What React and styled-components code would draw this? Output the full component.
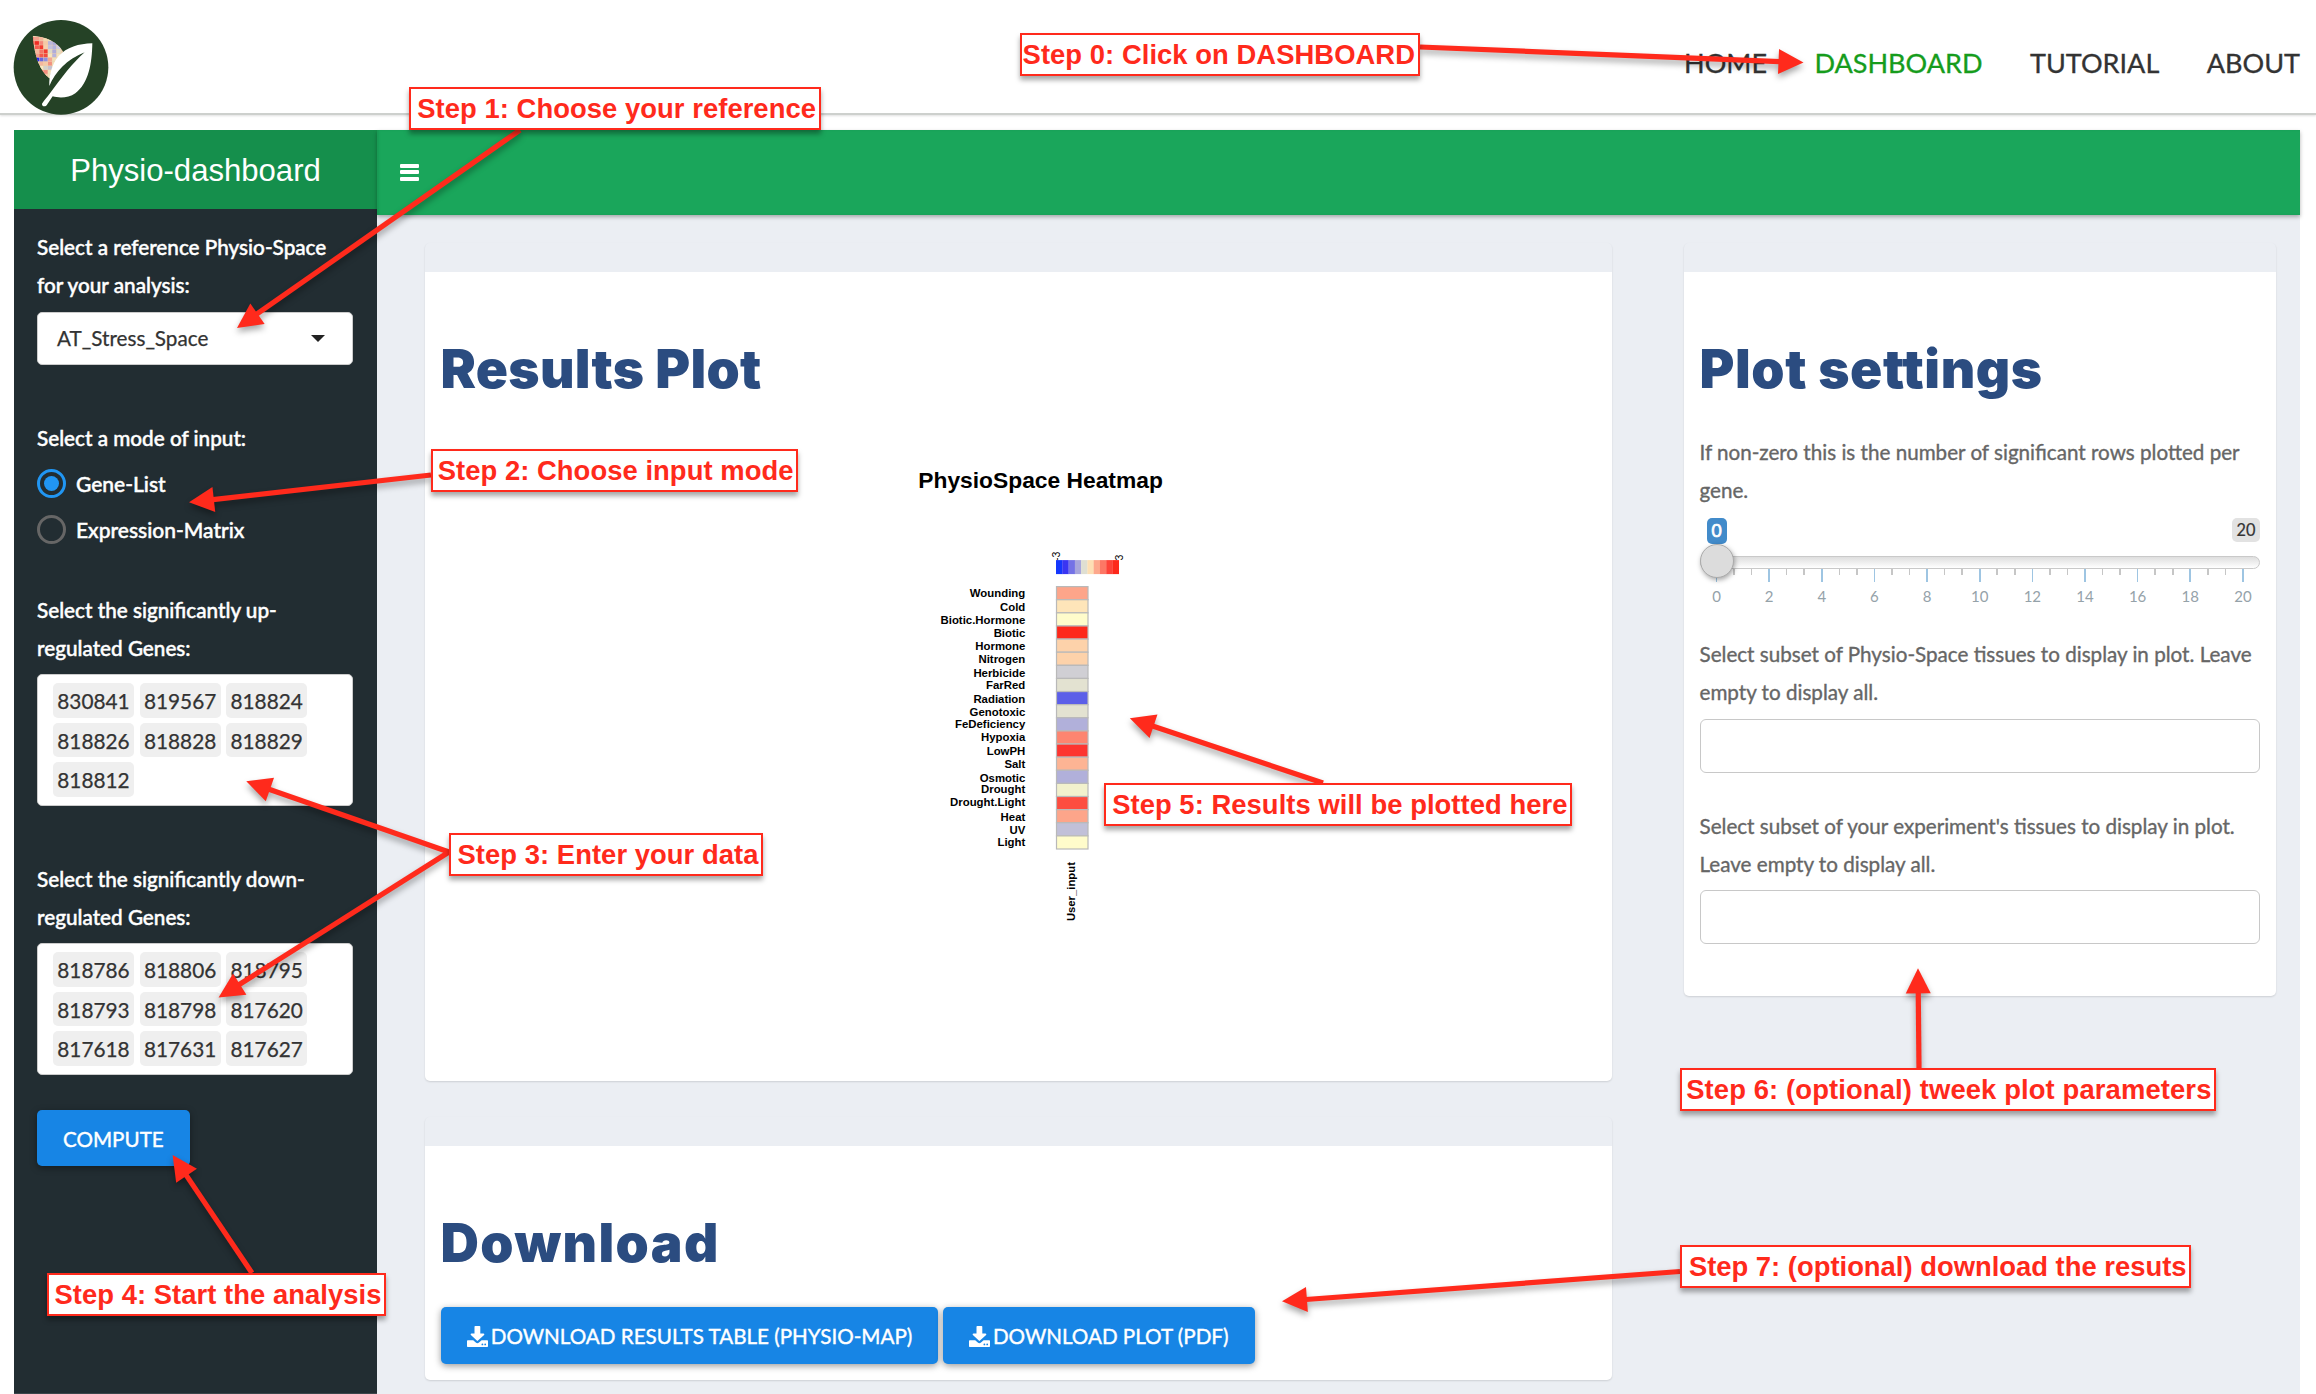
import React from 'react';
import styled, { createGlobalStyle, css } from 'styled-components';

const RED = '#ff2a1c';
const BLUE = '#1785e5';
const NAVY = '#2b4c80';
const CANVAS = '#ebeef3';

const GlobalStyle = createGlobalStyle`
  * { box-sizing: border-box; }
  body {
    margin: 0;
    background: #fff;
    font-family: Lato, 'Open Sans', sans-serif;
    font-size: 20.7px;
    overflow: hidden;
  }
`;

const Page = styled.div`
  position: relative;
  width: 2316px;
  height: 1394px;
  overflow: hidden;
  display: flex;
  flex-direction: column;
`;

/* ---------- top bar ---------- */
const TopBar = styled.header`
  flex: none;
  height: 115px;
  border-bottom: 2px solid #cdd0cd;
  box-shadow: 0 1px 2px rgba(0, 0, 0, 0.12);
  padding: 0 16px 0 13px;
  display: flex;
  justify-content: space-between;
  align-items: flex-start;
`;

const Emblem = styled.svg`
  display: block;
  flex: none;
  width: 96px;
  height: 96px;
  margin-top: 20px;
`;

const Nav = styled.nav`
  display: flex;
  gap: 47.4px;
  margin-top: 43px;
`;

const NavLink = styled.a`
  font-size: 27.05px;
  line-height: 40px;
  -webkit-text-stroke: 0.3px currentColor;
  color: ${(p) => (p.$active ? '#169c1c' : '#333')};
`;

/* ---------- dashboard shell ---------- */
const Dashboard = styled.div`
  flex: 1;
  margin: 15px 16px 0 14px;
  display: grid;
  grid-template-columns: 363px 1fr;
  min-height: 0;
`;

const SideColumn = styled.aside`
  background: #222d32;
  border-bottom: 1px solid #3b464b;
  display: flex;
  flex-direction: column;
`;

const Brand = styled.div`
  height: 79px;
  background: #158f4c;
  color: #fff;
  font: 400 31.1px/79px 'Liberation Sans', Arial, sans-serif;
  padding-top: 1px;
  text-align: center;
`;

const SideForm = styled.div`
  padding: 18.5px 24px 0 23px;
  display: flex;
  flex-direction: column;
  align-items: stretch;
`;

const Field = styled.div`
  display: flex;
  flex-direction: column;
  gap: ${(p) => p.$gap ?? 7.5}px;
  margin-bottom: ${(p) => p.$after}px;
`;

const FieldLabel = styled.label`
  line-height: 38px;
  white-space: pre-line;
  ${(p) =>
    p.$dark
      ? css`
          color: #666;
          font-size: 20.63px;
          -webkit-text-stroke: 0.35px #666;
        `
      : css`
          color: #fff;
          font-weight: 500;
          -webkit-text-stroke: 0.45px #fff;
        `}
`;

const SelectBox = styled.div`
  height: 53px;
  border: 1px solid #ccc;
  border-radius: 5px;
  background: #fff;
  color: #333;
  padding: 0 27px 1px 19px;
  display: flex;
  justify-content: space-between;
  align-items: center;
  -webkit-text-stroke: 0.25px #333;
`;

const Caret = styled.span`
  border: 7px solid transparent;
  border-top-color: #222;
  border-bottom: 0;
`;

const RadioList = styled.div`
  display: flex;
  flex-direction: column;
  gap: 17px;
`;

const RadioRow = styled.div`
  height: 29px;
  display: flex;
  align-items: center;
  gap: 10px;
  color: #fff;
  font-size: 21px;
  font-weight: 500;
  -webkit-text-stroke: 0.45px #fff;
`;

const RadioMark = styled.span`
  width: 29px;
  height: 29px;
  border-radius: 50%;
  border: 3px solid ${(p) => (p.$on ? '#2196f3' : '#666')};
  display: flex;
  align-items: center;
  justify-content: center;
  &::after {
    content: '';
    width: 15px;
    height: 15px;
    border-radius: 50%;
    background: ${(p) => (p.$on ? '#2196f3' : 'transparent')};
  }
`;

const ChipBox = styled.div`
  height: 131.5px;
  border: 1px solid #ccc;
  border-radius: 5px;
  background: #fff;
  padding: 8px 15px;
  display: grid;
  grid-template-columns: repeat(3, 81px);
  grid-auto-rows: 34.5px;
  gap: 5px 5.6px;
`;

const Chip = styled.span`
  background: #efefef;
  border-radius: 5px;
  color: #333;
  font-size: 20.8px;
  line-height: 35px;
  text-align: center;
  -webkit-text-stroke: 0.25px #333;
`;

const Button = styled.button`
  font: 400 20.62px/1 Lato, sans-serif;
  -webkit-text-stroke: 0.4px #fff;
  color: #fff;
  background: ${BLUE};
  border: 0;
  border-radius: 5px;
  height: ${(p) => p.$height}px;
  padding: 1px 26px 0;
  display: flex;
  align-items: center;
  gap: 3.3px;
  white-space: nowrap;
  box-shadow: 0 2px 7px rgba(0, 0, 0, 0.4);
  align-self: flex-start;
`;

/* ---------- main column ---------- */
const MainColumn = styled.main`
  background: ${CANVAS};
  display: flex;
  flex-direction: column;
`;

const GreenBar = styled.div`
  flex: none;
  height: 85px;
  background: #1aa65b;
  box-shadow: 0 2px 4px rgba(0, 0, 0, 0.3), inset 2px 0 2px rgba(0, 0, 0, 0.08);
  display: flex;
  padding: 34px 0 0 23px;
`;

const Burger = styled.span`
  width: 19px;
  height: 16.5px;
  display: flex;
  flex-direction: column;
  justify-content: space-between;
`;

const BurgerLine = styled.i`
  height: 3.6px;
  border-radius: 1px;
  background: #fff;
`;

const Content = styled.div`
  padding: 28px 24px 0 47.5px;
  display: flex;
  align-items: flex-start;
  justify-content: space-between;
`;

const CardStack = styled.div`
  width: 1187px;
  display: flex;
  flex-direction: column;
  gap: 36px;
`;

const Card = styled.section`
  width: ${(p) => p.$width ?? 1187}px;
  height: ${(p) => p.$height}px;
  background: #fff;
  border-top: 29px solid ${CANVAS};
  border-radius: 5px;
  box-shadow: 0 1px 2px rgba(0, 0, 0, 0.13);
  padding: 67px 16px 0;
`;

const Heading = styled.h1`
  margin: 0 0 34.4px;
  font: 900 53.2px/60px Inter, sans-serif;
  letter-spacing: ${(p) => p.$track}px;
  color: ${NAVY};
`;

const ButtonRow = styled.div`
  display: flex;
  gap: 4.3px;
`;

const PlotArea = styled.svg`
  display: block;
  margin-top: -34.4px;
  font-family: 'Liberation Sans', Arial, sans-serif;
`;

const TextInput = styled.div`
  height: 54px;
  border: 1px solid #c8c8c8;
  border-radius: 6px;
  background: #fff;
`;

/* ---------- range slider ---------- */
const Slider = styled.div`
  height: 117px;
`;

const Badges = styled.div`
  height: 38px;
  display: flex;
  justify-content: space-between;
  align-items: flex-start;
  padding-left: 7px;
`;

const Badge = styled.span`
  height: ${(p) => (p.$current ? 26 : 24)}px;
  width: ${(p) => (p.$current ? 20 : 28)}px;
  border-radius: 5px;
  text-align: center;
  font-size: ${(p) => (p.$current ? 17.5 : 16.3)}px;
  font-weight: 400;
  -webkit-text-stroke: ${(p) => (p.$current ? '0.7px #fff' : '0.2px #333')};
  line-height: ${(p) => (p.$current ? 26 : 23)}px;
  background: ${(p) => (p.$current ? '#428bca' : '#e2e2e2')};
  color: ${(p) => (p.$current ? '#fff' : '#333')};
`;

const Rail = styled.div`
  position: relative;
  height: 13px;
  border: 1px solid #c9c9c9;
  border-radius: 7px;
  background: linear-gradient(#dedede, #fff);
`;

const Knob = styled.span`
  position: absolute;
  left: -1px;
  top: -13px;
  width: 34px;
  height: 34px;
  border-radius: 50%;
  border: 1px solid #ababab;
  background: #dcdcdc;
  box-shadow: 1px 2px 5px rgba(0, 0, 0, 0.35);
`;

const Ticks = styled.div`
  display: flex;
  justify-content: space-between;
  height: 13px;
  padding: 0 17px;
`;

const Tick = styled.i`
  width: 1.6px;
  margin: 0 -0.8px;
  height: ${(p) => (p.$major ? 13 : 6)}px;
  background: ${(p) => (p.$major ? '#9ec5e2' : '#c6c6c6')};
`;

const Scale = styled.div`
  display: flex;
  justify-content: space-between;
  padding: 4px 17px 0;
`;

const ScaleMark = styled.span`
  width: 0;
  display: flex;
  justify-content: center;
  font-size: 15px;
  line-height: 20px;
  color: #95a2a9;
`;

/* ---------- tutorial annotations ---------- */
const Arrows = styled.svg`
  position: absolute;
  left: 0;
  top: 0;
  filter: drop-shadow(0 4px 3px rgba(0, 0, 0, 0.35));
`;

const Note = styled.div`
  position: absolute;
  left: ${(p) => p.$x}px;
  top: ${(p) => p.$y}px;
  width: ${(p) => p.$w}px;
  height: 43px;
  border: 2.5px solid ${RED};
  background: #fff;
  box-shadow: 0 4px 5px rgba(0, 0, 0, 0.35);
  color: ${RED};
  font: 700 27.4px/40px 'Liberation Sans', Arial, sans-serif;
  letter-spacing: ${(p) => p.$track ?? 0.05}px;
  white-space: nowrap;
  display: flex;
  justify-content: flex-end;
  padding-right: 2.5px;
`;

const NOTES = [
  [1020, 32.5, 399.5, 'Step 0: Click on DASHBOARD'],
  [409, 87.3, 411.5, 'Step 1: Choose your reference'],
  [431, 449, 367, 'Step 2: Choose input mode'],
  [449, 833, 314, 'Step 3: Enter your data'],
  [47, 1273, 339, 'Step 4: Start the analysis'],
  [1104, 783, 468, 'Step 5: Results will be plotted here'],
  [1680, 1068, 536, 'Step 6: (optional) tweek plot parameters', 0.12],
  [1680, 1245, 511, 'Step 7: (optional) download the resuts', 0],
];

// start x, start y, tip x, tip y
const ARROWS = [
  [1420, 47, 1803.5, 62.5],
  [520, 130, 237, 328],
  [431, 475, 189, 502.3],
  [449, 852, 246.3, 781.3],
  [449, 852, 218.6, 997.5],
  [252, 1273, 172.6, 1155],
  [1323, 783, 1129.8, 718.3],
  [1919, 1068, 1918, 968.3],
  [1680, 1271.5, 1282, 1301.3],
];

function Arrow({ from: [x1, y1, x2, y2] }) {
  const len = Math.hypot(x2 - x1, y2 - y1);
  const ux = (x2 - x1) / len;
  const uy = (y2 - y1) / len;
  const bx = x2 - ux * 25;
  const by = y2 - uy * 25;
  return (
    <g>
      <line x1={x1} y1={y1} x2={bx + ux} y2={by + uy} stroke={RED} strokeWidth="5.2" />
      <polygon
        fill={RED}
        points={`${x2},${y2} ${bx - uy * 12.5},${by + ux * 12.5} ${bx + uy * 12.5},${by - ux * 12.5}`}
      />
    </g>
  );
}

const LEAF = [
  ['#f6867a', '#f4a08c', '#f2b79b', '#f6d9b0', '#e8e2c4', '#c9c6e0', '#b3b0d8'],
  ['#f04a3e', '#ee2c24', '#f4877a', '#f5c9a6', '#b9b6dc', '#a9a8da', '#b3b0d8'],
  ['#f8b29a', '#f55d50', '#f3392f', '#f7cfab', '#c3c0dd', '#b2b0dc', '#cfcbe0'],
  ['#f6e3b9', '#f7b79b', '#f47668', '#f23b30', '#dcdac8', '#aeacdb', '#e0dcc9'],
  ['#f4cda8', '#f59d88', '#f4574a', '#f04b40', '#f5e6bd', '#b7b4dc', '#f1e3c0'],
  ['#b2b2dc', '#1a1af0', '#6a68de', '#908ede', '#f4a692', '#f0e0ba', '#f0e0ba'],
  ['#f6e3b9', '#f3e2bd', '#f4b79d', '#f6c8a5', '#f3917f', '#f0e0ba', '#f0e0ba'],
  ['#f6e3b9', '#c9c6d8', '#f6e8c0', '#d4d2cc', '#c4c2cf', '#f0e0ba', '#f0e0ba'],
  ['#f6e3b9', '#f5c0a0', '#f26a5c', '#f58c7c', '#f0e0ba', '#f0e0ba', '#f0e0ba'],
  ['#f6e3b9', '#f0584b', '#f0473c', '#f6c5a4', '#f0e0ba', '#f0e0ba', '#f0e0ba'],
];

function Logo() {
  return (
    <Emblem viewBox="39 60 288 288">
      <defs>
        <clipPath id="leafClip">
          <path d="M98 107 C136 110 172 124 190 156 C166 180 152 206 150 236 C118 212 104 168 98 107 Z" />
        </clipPath>
      </defs>
      <circle cx="183" cy="202" r="142" fill="#254226" />
      <g clipPath="url(#leafClip)">
        <rect x="90" y="100" width="110" height="140" fill="#eecfae" />
        {LEAF.map((row, r) =>
          row.map((c, i) => (
            <rect key={`${r}-${i}`} x={92 + i * 13} y={111 + r * 12.4} width="11.8" height="11.2" fill={c} />
          ))
        )}
      </g>
      <path
        fill="#fff"
        d="M277 130 C236 131 200 142 176 168 C154 194 147 228 148 258 C166 216 200 178 254 157 C222 184 182 236 150 280 C140 294 130 304 126 311 C125 319 136 322 141 314 L158 289 C178 295 206 294 226 280 C266 250 276 190 277 130 Z"
      />
    </Emblem>
  );
}

function SaveIcon() {
  return (
    <svg width="21" height="21" viewBox="0 0 21 21" fill="none">
      <path fill="#fff" d="M8.3 0h4.200a.8.8 0 0 1 .8.8V7.600h3.200c.8 0 1.100.8.6 1.300L11 14.600a.8.8 0 0 1-1.200 0L3.900 8.900c-.5-.5-.2-1.300.6-1.300h3V.8a.8.8 0 0 1 .8-.8z" />
      <path fill="#fff" d="M1 14.200h5.200l2.600 2.400c.9.9 2.300.9 3.200 0l2.600-2.400H20c.6 0 1 .4 1 1V20c0 .6-.4 1-1 1H1c-.6 0-1-.4-1-1v-4.800c0-.6.4-1 1-1z" />
      <circle cx="15.400" cy="18.400" r=".9" fill={BLUE} />
      <circle cx="18.200" cy="18.400" r=".9" fill={BLUE} />
    </svg>
  );
}

const ROWS = [
  ['Wounding', '#fda58a', 597.3],
  ['Cold', '#fee5b9', 611.3],
  ['Biotic.Hormone', '#fffccb', 624],
  ['Biotic', '#fd281b', 637.3],
  ['Hormone', '#fdd2aa', 650.3],
  ['Nitrogen', '#fdd2aa', 662.7],
  ['Herbicide', '#d0cfd4', 676.7],
  ['FarRed', '#e3e2d1', 689.3],
  ['Radiation', '#5c5fe8', 702.7],
  ['Genotoxic', '#e3e2d1', 715.7],
  ['FeDeficiency', '#b1b0da', 728],
  ['Hypoxia', '#fd8570', 740.7],
  ['LowPH', '#fd3530', 754.7],
  ['Salt', '#fdb494', 768],
  ['Osmotic', '#b1b0da', 781.7],
  ['Drought', '#f2f1cd', 793.3],
  ['Drought.Light', '#fd4d40', 806],
  ['Heat', '#fda58a', 821],
  ['UV', '#c1c0d8', 833.7],
  ['Light', '#fffccb', 846],
];

const KEY = ['#1437fd', '#3a35f2', '#7472e6', '#a8a6dc', '#dfdfd2', '#fddfb4', '#fda88c', '#fd7765', '#fd4238', '#fd281b'];

function Heatmap() {
  const step = 13.12;
  return (
    <PlotArea width="1155" height="640" viewBox="441 398.9 1155 640">
      <text x="918.3" y="487.9" fontSize="22.8" fontWeight="700">PhysioSpace Heatmap</text>
      <text transform="translate(1060 561) rotate(-90)" fontSize="10.5">-3</text>
      <text transform="translate(1122.5 560.5) rotate(-90)" fontSize="10.5">3</text>
      {KEY.map((c, i) => (
        <rect key={c} x={1056 + i * 6.28} y="560" width="6.5" height="14" fill={c} />
      ))}
      {ROWS.map(([name, color, base], i) => (
        <g key={name}>
          <text x="1025.3" y={base} fontSize="11.4" fontWeight="700" textAnchor="end">{name}</text>
          <rect x="1056.500" y={586.5 + i * step} width="31.500" height={step} fill={color} stroke="#b9b9b9" strokeWidth="1.2" />
        </g>
      ))}
      <text transform="translate(1075 921) rotate(-90)" fontSize="11.3" fontWeight="700">User_input</text>
    </PlotArea>
  );
}

function RangeSlider() {
  return (
    <Slider>
      <Badges>
        <Badge $current>0</Badge>
        <Badge>20</Badge>
      </Badges>
      <Rail><Knob /></Rail>
      <Ticks>
        {Array.from({ length: 31 }, (_, i) => <Tick key={i} $major={i % 3 === 0} />)}
      </Ticks>
      <Scale>
        {Array.from({ length: 11 }, (_, i) => <ScaleMark key={i}>{i * 2}</ScaleMark>)}
      </Scale>
    </Slider>
  );
}

const UP = ['830841', '819567', '818824', '818826', '818828', '818829', '818812'];
const DOWN = ['818786', '818806', '818795', '818793', '818798', '817620', '817618', '817631', '817627'];

export default function App() {
  return (
    <Page>
      <GlobalStyle />
      <TopBar>
        <Logo />
        <Nav>
          <NavLink>HOME</NavLink>
          <NavLink $active>DASHBOARD</NavLink>
          <NavLink>TUTORIAL</NavLink>
          <NavLink>ABOUT</NavLink>
        </Nav>
      </TopBar>

      <Dashboard>
        <SideColumn>
          <Brand>Physio-dashboard</Brand>
          <SideForm>
            <Field $gap={8.5} $after={54}>
              <FieldLabel>{'Select a reference Physio-Space\nfor your analysis:'}</FieldLabel>
              <SelectBox>AT_Stress_Space<Caret /></SelectBox>
            </Field>
            <Field $gap={12} $after={46.7}>
              <FieldLabel>Select a mode of input:</FieldLabel>
              <RadioList>
                <RadioRow><RadioMark $on />Gene-List</RadioRow>
                <RadioRow><RadioMark />Expression-Matrix</RadioRow>
              </RadioList>
            </Field>
            <Field $after={54.2}>
              <FieldLabel>{'Select the significantly up-\nregulated Genes:'}</FieldLabel>
              <ChipBox>{UP.map((g) => <Chip key={g}>{g}</Chip>)}</ChipBox>
            </Field>
            <Field $after={35.5}>
              <FieldLabel>{'Select the significantly down-\nregulated Genes:'}</FieldLabel>
              <ChipBox>{DOWN.map((g) => <Chip key={g}>{g}</Chip>)}</ChipBox>
            </Field>
            <Button $height={56}>COMPUTE</Button>
          </SideForm>
        </SideColumn>

        <MainColumn>
          <GreenBar>
            <Burger><BurgerLine /><BurgerLine /><BurgerLine /></Burger>
          </GreenBar>
          <Content>
            <CardStack>
              <Card $height={838}>
                <Heading $track={0.3}>Results Plot</Heading>
                <Heatmap />
              </Card>
              <Card $height={263}>
                <Heading $track={1.4}>Download</Heading>
                <ButtonRow>
                  <Button $height={57}><SaveIcon />DOWNLOAD RESULTS TABLE (PHYSIO-MAP)</Button>
                  <Button $height={57}><SaveIcon />DOWNLOAD PLOT (PDF)</Button>
                </ButtonRow>
              </Card>
            </CardStack>

            <Card $width={592.5} $height={753}>
              <Heading $track={0.6}>Plot settings</Heading>
              <Field $gap={8.3} $after={0}>
                <FieldLabel $dark>{'If non-zero this is the number of significant rows plotted per\ngene.'}</FieldLabel>
                <RangeSlider />
              </Field>
              <Field $gap={8} $after={34.3}>
                <FieldLabel $dark>{'Select subset of Physio-Space tissues to display in plot. Leave\nempty to display all.'}</FieldLabel>
                <TextInput />
              </Field>
              <Field $gap={7.5} $after={0}>
                <FieldLabel $dark>{"Select subset of your experiment's tissues to display in plot.\nLeave empty to display all."}</FieldLabel>
                <TextInput />
              </Field>
            </Card>
          </Content>
        </MainColumn>
      </Dashboard>

      <Arrows width="2316" height="1394" viewBox="0 0 2316 1394">
        {ARROWS.map((a) => <Arrow key={a.join()} from={a} />)}
      </Arrows>
      {NOTES.map(([x, y, w, text, track]) => (
        <Note key={text} $x={x} $y={y} $w={w} $track={track}>{text}</Note>
      ))}
    </Page>
  );
}
